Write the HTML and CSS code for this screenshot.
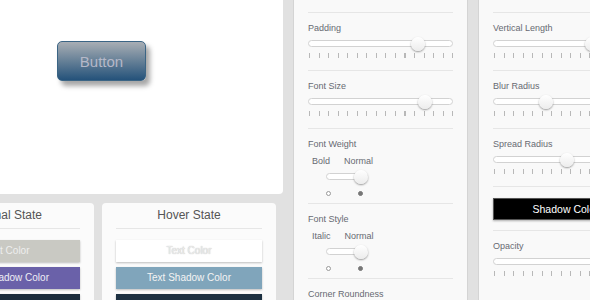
FILE: index.html
```html
<!DOCTYPE html>
<html lang="en">
<head>
    <meta charset="UTF-8">
    <meta name="viewport" content="width=device-width, initial-scale=1.0">
    <title>Button Maker</title>
    <link rel="stylesheet" href="styles.css">
</head>
<body>
    <div class="page">
        <div class="left-col">
            <div class="preview">
                <button class="demo-btn">Button</button>
            </div>

            <div class="states">
                <div class="state-card">
                    <h3>Normal State</h3>
                    <div class="swatch text-normal">Text Color</div>
                    <div class="swatch shadow-normal">Text Shadow Color</div>
                    <div class="swatch bg-normal">Background Color</div>
                </div>
                <div class="state-card">
                    <h3>Hover State</h3>
                    <div class="swatch text-hover">Text Color</div>
                    <div class="swatch shadow-hover">Text Shadow Color</div>
                    <div class="swatch bg-hover">Background Color</div>
                </div>
            </div>
        </div>

        <!-- Text settings -->
        <div class="panel">
            <div class="section">
                <div class="label">Padding</div>
                <div class="slider"><span class="thumb" style="left: 102px"></span></div>
                <div class="ticks"></div>
            </div>
            <div class="section">
                <div class="label">Font Size</div>
                <div class="slider"><span class="thumb" style="left: 109px"></span></div>
                <div class="ticks"></div>
            </div>
            <div class="section switch">
                <div class="label">Font Weight</div>
                <div class="switch-labels"><span>Bold</span><span>Normal</span></div>
                <div class="toggle"><span class="thumb"></span></div>
                <div class="dots"><span class="dot"></span><span class="dot on"></span></div>
            </div>
            <div class="section switch">
                <div class="label">Font Style</div>
                <div class="switch-labels"><span>Italic</span><span>Normal</span></div>
                <div class="toggle"><span class="thumb"></span></div>
                <div class="dots"><span class="dot"></span><span class="dot on"></span></div>
            </div>
            <div class="section">
                <div class="label">Corner Roundness</div>
                <div class="slider"><span class="thumb" style="left: 30px"></span></div>
                <div class="ticks"></div>
            </div>
        </div>

        <!-- Box shadow settings -->
        <div class="panel">
            <div class="section">
                <div class="label">Vertical Length</div>
                <div class="slider"><span class="thumb" style="left: 91px"></span></div>
                <div class="ticks"></div>
            </div>
            <div class="section">
                <div class="label">Blur Radius</div>
                <div class="slider"><span class="thumb" style="left: 45px"></span></div>
                <div class="ticks"></div>
            </div>
            <div class="section">
                <div class="label">Spread Radius</div>
                <div class="slider"><span class="thumb" style="left: 66px"></span></div>
                <div class="ticks"></div>
            </div>
            <div class="section color">
                <button class="color-btn">Shadow Color</button>
            </div>
            <div class="section">
                <div class="label">Opacity</div>
                <div class="slider"><span class="thumb" style="left: 129px"></span></div>
                <div class="ticks"></div>
            </div>
        </div>
    </div>
</body>
</html>
```

FILE: styles.css
```css
/* Global */
html, body {
    margin: 0;
    padding: 0;
    overflow: hidden;
}

body {
    background-color: #e1e1e1;
    font-family: "Liberation Sans", Arial, sans-serif;
    color: #666;
}

.page {
    display: flex;
    align-items: flex-start;
    gap: 10px;
    margin: -72px 0 0 -80px;
}

/* Preview + states */
.left-col {
    width: 363px;
    flex-shrink: 0;
    display: flex;
    flex-direction: column;
    gap: 9px;
}

.preview {
    height: 266px;
    background-color: #fff;
    border-radius: 0 0 4px 4px;
    display: flex;
    align-items: center;
    justify-content: center;
}

.demo-btn {
    width: 89px;
    height: 40px;
    border: 1px solid #3b6585;
    border-radius: 5px;
    background: linear-gradient(#a8aeb4, #24527a);
    color: #b5b8c8;
    font-family: "Liberation Sans", Arial, sans-serif;
    font-size: 15px;
    box-shadow: 4px 5px 5px rgba(0, 0, 0, 0.35);
}

.states {
    display: flex;
    gap: 8px;
}

.state-card {
    width: 174px;
    box-sizing: border-box;
    background-color: #fbfbfb;
    border-radius: 4px;
    padding: 5px 14px 12px;
}

.state-card h3 {
    margin: 0 0 11px;
    padding-bottom: 6px;
    border-bottom: 1px solid #e6e6e6;
    font-size: 12px;
    line-height: 14px;
    font-weight: normal;
    text-align: center;
    color: #555;
}

.swatch {
    height: 22px;
    line-height: 22px;
    margin-bottom: 5px;
    font-size: 10px;
    text-align: center;
    box-shadow: 0 1px 2px rgba(0, 0, 0, 0.25);
}

.text-normal {
    background-color: #c9c9c3;
    color: #eee;
}

.shadow-normal {
    background-color: #6a61a9;
    color: #eeeef6;
}

.bg-normal {
    background-color: #1b2c3c;
    color: #fff;
}

.text-hover {
    background-color: #fff;
    color: #ececec;
    text-shadow: 0 0 1px #aaa;
}

.shadow-hover {
    background-color: #80a5bb;
    color: #f4f4f4;
}

.bg-hover {
    background-color: #1d3142;
    color: #fff;
}

/* Settings panels */
.panel {
    width: 175px;
    height: 420px;
    flex-shrink: 0;
    box-sizing: border-box;
    background-color: #f9f9f9;
    border: 1px solid #d4d4d4;
    border-top: none;
    padding: 84px 14px 0;
}

.section {
    border-top: 1px solid #e6e6e6;
    padding: 9px 0 12px;
}

.label {
    font-size: 9px;
    line-height: 12px;
    color: #676a72;
}

.slider {
    position: relative;
    height: 7px;
    margin-top: 6px;
    box-sizing: border-box;
    border: 1px solid #d2d2d2;
    border-radius: 4px;
    background-color: #fff;
}

.thumb {
    position: absolute;
    top: -4px;
    width: 14px;
    height: 14px;
    border-radius: 50%;
    background: linear-gradient(#fff, #ececec);
    box-shadow: 0 1px 2px rgba(0, 0, 0, 0.4);
}

.ticks {
    height: 5px;
    margin: 6px 0 0 1px;
    background: repeating-linear-gradient(90deg, #b8b8b8 0, #b8b8b8 1px, transparent 1px, transparent 9.55px);
}

/* On/off switches */
.section.switch {
    padding-bottom: 7px;
}

.switch-labels {
    display: flex;
    gap: 14px;
    margin-top: 5px;
    padding-left: 4px;
    font-size: 9px;
    line-height: 12px;
    color: #676a72;
}

.toggle {
    position: relative;
    width: 42px;
    height: 7px;
    margin: 6px 0 0 18px;
    box-sizing: border-box;
    border: 1px solid #d2d2d2;
    border-radius: 4px;
    background-color: #fff;
}

.toggle .thumb {
    left: 27px;
}

.dots {
    display: flex;
    align-items: center;
    gap: 27px;
    height: 6px;
    margin: 10px 0 0 18px;
}

.dot {
    width: 5px;
    height: 5px;
    box-sizing: border-box;
    border-radius: 50%;
    border: 1px solid #999;
    background-color: #fff;
}

.dot.on {
    border-color: #777;
    background-color: #777;
}

/* Colour picker button */
.section.color {
    padding: 11px 0 10px;
}

.color-btn {
    display: block;
    width: 100%;
    height: 22px;
    border: 1px solid #555;
    background-color: #000;
    color: #fff;
    font-family: "Liberation Sans", Arial, sans-serif;
    font-size: 10.5px;
    box-shadow: 0 1px 2px rgba(0, 0, 0, 0.3);
}
```
